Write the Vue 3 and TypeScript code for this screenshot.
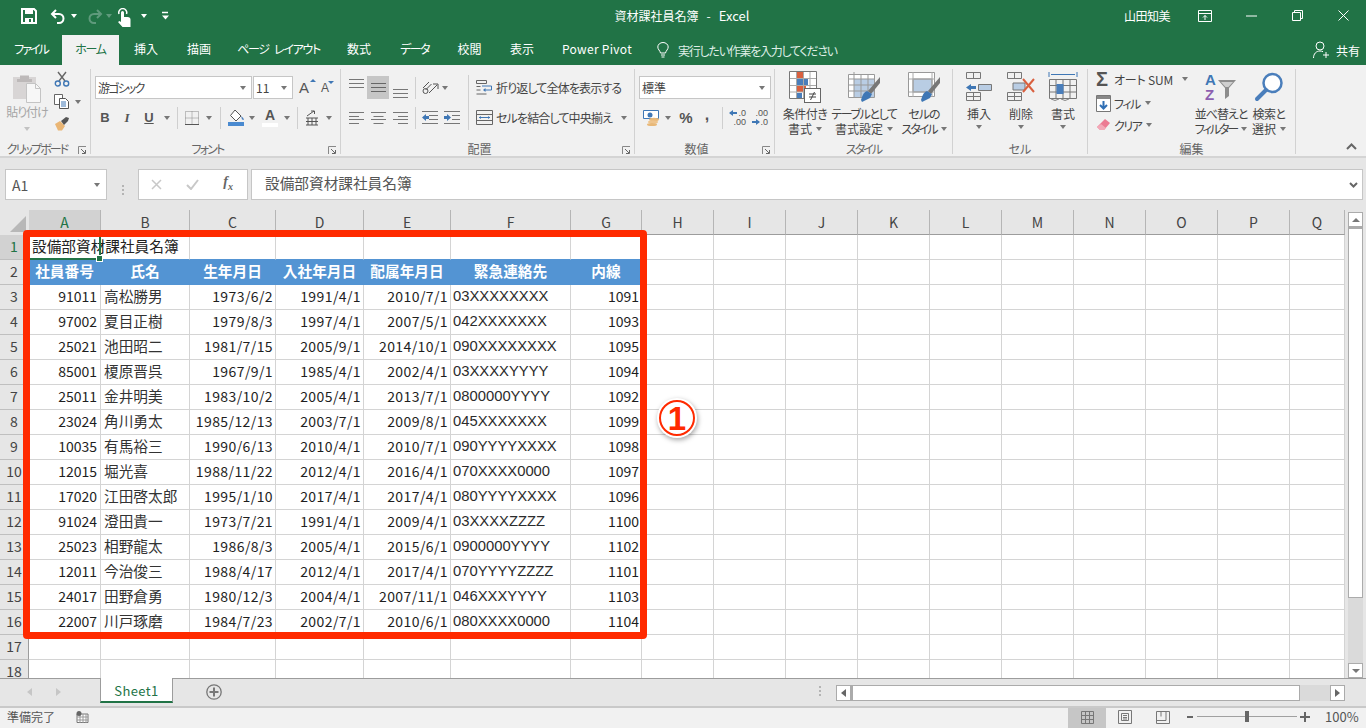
<script setup lang="ts">
interface Cell { text: string; cls: string }
const letters = 'ABCDEFGHIJKLMNOPQ'.split('')
const header = ['社員番号', '氏名', '生年月日', '入社年月日', '配属年月日', '緊急連絡先', '内線']
const data: string[][] = [
  ['91011', '高松勝男', '1973/6/2', '1991/4/1', '2010/7/1', '03XXXXXXXX', '1091'],
  ['97002', '夏目正樹', '1979/8/3', '1997/4/1', '2007/5/1', '042XXXXXXX', '1093'],
  ['25021', '池田昭二', '1981/7/15', '2005/9/1', '2014/10/1', '090XXXXXXXX', '1095'],
  ['85001', '榎原晋呉', '1967/9/1', '1985/4/1', '2002/4/1', '03XXXXYYYY', '1094'],
  ['25011', '金井明美', '1983/10/2', '2005/4/1', '2013/7/1', '0800000YYYY', '1092'],
  ['23024', '角川勇太', '1985/12/13', '2003/7/1', '2009/8/1', '045XXXXXXX', '1099'],
  ['10035', '有馬裕三', '1990/6/13', '2010/4/1', '2010/7/1', '090YYYYXXXX', '1098'],
  ['12015', '堀光喜', '1988/11/22', '2012/4/1', '2016/4/1', '070XXXX0000', '1097'],
  ['17020', '江田啓太郎', '1995/1/10', '2017/4/1', '2017/4/1', '080YYYYXXXX', '1096'],
  ['91024', '澄田貴一', '1973/7/21', '1991/4/1', '2009/4/1', '03XXXXZZZZ', '1100'],
  ['25023', '相野龍太', '1986/8/3', '2005/4/1', '2015/6/1', '0900000YYYY', '1102'],
  ['12011', '今治俊三', '1988/4/17', '2012/4/1', '2017/4/1', '070YYYYZZZZ', '1101'],
  ['24017', '田野倉勇', '1980/12/3', '2004/4/1', '2007/11/1', '046XXXYYYY', '1103'],
  ['22007', '川戸琢磨', '1984/7/23', '2002/7/1', '2010/6/1', '080XXXX0000', '1104'],
]
const kinds = ['right id', 'left jp', 'right date', 'right date', 'right date', 'left phone', 'right']
const rows: { n: number; cells: Cell[] }[] = []
for (let r = 1; r <= 18; r++) {
  const cells: Cell[] = []
  for (let c = 0; c < 17; c++) {
    let text = ''
    let cls = ''
    if (r === 1 && c === 0) { text = '設備部資材課社員名簿'; cls = 'left jp title-cell' }
    else if (r === 1 && c < 7) cls = 'above-head'
    else if (r === 2 && c < 7) { text = header[c]; cls = 'head' }
    else if (r >= 3 && r <= 16 && c < 7) { text = data[r - 3][c]; cls = kinds[c] }
    cells.push({ text, cls })
  }
  rows.push({ n: r, cells })
}
const tabs = ['ファイル', 'ホーム', '挿入', '描画', 'ページ レイアウト', '数式', 'データ', '校閲', '表示', 'Power Pivot']
</script>

<template>
  <div class="app">
    <header class="titlebar">
      <div class="qat">
        <svg class="q-save" width="16" height="16" viewBox="0 0 16 16"><path d="M1 1h12l2 2v12H1z" fill="none" stroke="#fff" stroke-width="2"/><rect x="4" y="1" width="8" height="5" fill="#fff"/><rect x="4" y="10" width="8" height="5" fill="#fff"/><rect x="8" y="11" width="2" height="3" fill="#217346"/></svg>
        <svg class="q-undo" width="16" height="16" viewBox="0 0 16 16"><path d="M6 2 2 6l4 4M2 6h7a4.500 4.500 0 0 1 0 9H7" fill="none" stroke="#fff" stroke-width="2"/></svg>
        <span class="caret white q-c1"></span>
        <svg class="q-redo" width="16" height="16" viewBox="0 0 16 16"><path d="m10 2 4 4-4 4M14 6H7a4.500 4.500 0 0 0 0 9h2" fill="none" stroke="#5f9a7c" stroke-width="2"/></svg>
        <span class="caret dim q-c2"></span>
        <svg class="q-touch" width="14" height="20" viewBox="0 0 14 20"><path d="M2 6a4 4 0 1 1 7.500 0" fill="none" stroke="#fff" stroke-width="1.500"/><path d="M4 4.500a1.500 1.500 0 0 1 3 0V9h3.500q3 0 3 2.500V19H5.500L1 14l1.500-1L4 14z" fill="#fff"/></svg>
        <span class="caret white q-c3"></span>
        <svg class="q-more" width="9" height="9" viewBox="0 0 9 9"><path d="M1 1.500h6" stroke="#fff" stroke-width="1.500"/><path d="M1 4.500h7L4.500 8.500z" fill="#fff"/></svg>
      </div>
      <div class="doc-title">資材課社員名簿&nbsp;&nbsp; - &nbsp;&nbsp;<span class="excel">Excel</span></div>
      <div class="win">
        <span class="user">山田知美</span>
        <svg class="w-ribbon" width="14" height="12" viewBox="0 0 14 12"><path d="M.5.500h13v11H.500zM.5 3.500h13M7 10V5.500M5 7.500l2-2 2 2" fill="none" stroke="#fff"/></svg>
        <svg class="w-min" width="11" height="2" viewBox="0 0 11 2"><path d="M0 1h11" stroke="#fff"/></svg>
        <svg class="w-max" width="11" height="11" viewBox="0 0 11 11"><path d="M.5 2.500h8v8h-8zM2.500 2.500v-2h8v8h-2" fill="none" stroke="#fff"/></svg>
        <svg class="w-close" width="11" height="11" viewBox="0 0 11 11"><path d="m.5.500 10 10M10.500.500l-10 10" stroke="#fff"/></svg>
      </div>
    </header>

    <nav class="tabs">
      <span v-for="(t, i) in tabs" :key="t" class="tab" :class="{ active: i === 1 }">{{ t }}</span>
      <svg class="bulb" width="12" height="16" viewBox="0 0 12 16"><path d="M3.500 11C3 8.500.8 7.500.8 5a5.200 4.500 0 0 1 10.400 0c0 2.500-2.200 3.500-2.700 6zM4 13h4M4.500 15h3" fill="none" stroke="#fff"/></svg>
      <span class="tell">実行したい作業を入力してください</span>
      <svg class="share-ic" width="17" height="18" viewBox="0 0 17 18"><circle cx="7" cy="5" r="4" fill="none" stroke="#fff"/><path d="M.5 17c0-4 2.500-7 6.500-7 1 0 2 .2 3 .7M13 11v6M10 14h6" fill="none" stroke="#fff"/></svg>
      <span class="share">共有</span>
    </nav>

    <section class="ribbon">
      <!-- clipboard -->
      <div class="group g-clip">
        <div class="gbody">
          <div class="big paste">
            <svg width="30" height="29" viewBox="0 0 30 29"><path d="M1 3h23v22H1z" fill="#d8d5d5"/><path d="M8 1.500h9V5h3v3H5V5h3z" fill="#bdb9b9"/><path d="M14.500 9.500h9l5 5v14h-14z" fill="#f7f7f7" stroke="#c4c4c4"/><path d="M23.500 9.500v5h5" fill="none" stroke="#c4c4c4"/></svg>
            <span class="paste-text">貼り付け</span>
            <span class="caret light"></span>
          </div>
          <div class="clip-col">
            <svg width="16" height="16" viewBox="0 0 16 16"><path d="m4 1 7 9M12 1l-7 9" stroke="#666" stroke-width="1.400"/><circle cx="3.800" cy="12.500" r="2.500" fill="none" stroke="#3f77b5" stroke-width="1.400"/><circle cx="12.200" cy="12.500" r="2.500" fill="none" stroke="#3f77b5" stroke-width="1.400"/></svg>
            <div class="copy-row">
              <svg width="16" height="15" viewBox="0 0 16 15"><path d="M.5.500h8v10h-8z" fill="#fff" stroke="#666"/><path d="M5.500 4.500h6l3 3v7h-9z" fill="#fff" stroke="#555"/><path d="M7 8h5M7 10h5M7 12h5" stroke="#3f77b5"/></svg>
              <span class="caret ml5"></span>
            </div>
            <svg width="17" height="15" viewBox="0 0 17 15"><path d="m1 8 5-3 5 5-3 4.500H4z" fill="#eab675"/><path d="m7 5 5-4 3 1-1 3-4 4z" fill="#555"/></svg>
          </div>
        </div>
        <div class="glabel lz ls19">クリップボード</div>
        <span class="launch"><svg width="9" height="9" viewBox="0 0 9 9"><path d="M.5 8V.500H8" fill="none" stroke="#888"/><path d="M3 3l4 4M4 7.500h3.500V4" fill="none" stroke="#666"/></svg></span>
      </div>

      <!-- font -->
      <div class="group g-font">
        <div class="gbody col">
          <div class="row">
            <div class="select s-font"><span class="ls18">游ゴシック</span><span class="caret"></span></div>
            <div class="select s-size"><span>11</span><span class="caret"></span></div>
            <span class="grow-a a1">A<i class="up"></i></span>
            <span class="grow-a a2">A<i class="down"></i></span>
          </div>
          <div class="row r2">
            <span class="ib w22 glyph b">B</span>
            <span class="ib w22 glyph i">I</span>
            <span class="ib w22 glyph u">U</span>
            <span class="ib w14"><span class="caret"></span></span>
            <span class="ib w6"><span class="sep"></span></span>
            <span class="ib w24"><svg width="14" height="14" viewBox="0 0 14 14"><path d="M.5.500h13v13H.500zM7 .5v13M.5 7h13" fill="none" stroke="#888" stroke-dasharray="1 1"/><path d="M0 13.500h14" stroke="#555"/></svg></span>
            <span class="ib w10"><span class="caret"></span></span>
            <span class="ib w12"><span class="sep"></span></span>
            <span class="ib w20"><svg width="17" height="17" viewBox="0 0 17 17"><path d="m7 1 6 6-5 5-5.500-5.500z" fill="#fff" stroke="#555"/><path d="M13 7q3 2 3 4l-2-.5z" fill="#4a7ebb"/><rect y="13" width="16" height="4" fill="#4a8ad0"/></svg></span>
            <span class="ib w12"><span class="caret"></span></span>
            <span class="ib w24 col-a"><b>A</b><i></i></span>
            <span class="ib w9"><span class="caret"></span></span>
            <span class="ib w12"><span class="sep"></span></span>
            <span class="ib w18"><svg width="14" height="16" viewBox="0 0 14 16"><path d="M2 6 9 1M6 1h3.500v3M1 8h12M3 8v7M7 8v7M11 8v7M1 11.500h12M1 15h12" fill="none" stroke="#555"/></svg></span>
            <span class="ib w16"><span class="caret"></span></span>
          </div>
        </div>
        <div class="glabel lz ls18">フォント</div>
        <span class="launch"><svg width="9" height="9" viewBox="0 0 9 9"><path d="M.5 8V.500H8" fill="none" stroke="#888"/><path d="M3 3l4 4M4 7.500h3.500V4" fill="none" stroke="#666"/></svg></span>
      </div>

      <!-- alignment -->
      <div class="group g-align">
        <div class="gbody">
          <div class="col">
            <div class="row">
              <span class="ib w22 top"><svg width="15" height="9" viewBox="0 0 15 9"><path d="M0 .5h15M0 4.500h15M0 8.500h15" stroke="#777"/></svg></span>
              <span class="ib w22 on"><svg width="15" height="9" viewBox="0 0 15 9"><path d="M0 .5h15M0 4.500h15M0 8.500h15" stroke="#666"/></svg></span>
              <span class="ib w22 bottom"><svg width="15" height="9" viewBox="0 0 15 9"><path d="M0 .5h15M0 4.500h15M0 8.500h15" stroke="#777"/></svg></span>
              <span class="ib w8"><span class="sep"></span></span>
              <span class="ib w22"><svg width="17" height="15" viewBox="0 0 17 15"><path d="m1 8 6-6M3.500 10l6-6" stroke="#555"/><circle cx="3.500" cy="11" r="2.500" fill="none" stroke="#555"/><path d="M7 13 15 5M11 4h5v5" fill="none" stroke="#555"/></svg></span>
              <span class="ib w22 jl"><span class="caret"></span></span>
            </div>
            <div class="row r2">
              <span class="ib w22"><svg width="15" height="12" viewBox="0 0 15 12"><path d="M0 .5h15M0 4.500h10M0 7.500h15M0 11.500h10" stroke="#777"/></svg></span>
              <span class="ib w22"><svg width="15" height="12" viewBox="0 0 15 12"><path d="M0 .5h15M2.500 4.500h10M0 7.500h15M2.500 11.500h10" stroke="#777"/></svg></span>
              <span class="ib w22"><svg width="15" height="12" viewBox="0 0 15 12"><path d="M0 .5h15M5 4.500h10M0 7.500h15M5 11.500h10" stroke="#777"/></svg></span>
              <span class="ib w8"><span class="sep"></span></span>
              <span class="ib w22"><svg width="16" height="13" viewBox="0 0 16 13"><path d="M0 .5h16M7 4.500h9M7 8.500h9M0 12.500h16" stroke="#777"/><path d="M0 6.500 4 3v2h3v3H4v2z" fill="#3f77b5"/></svg></span>
              <span class="ib w22"><svg width="16" height="13" viewBox="0 0 16 13"><path d="M0 .5h16M8 4.500h8M8 8.500h8M0 12.500h16" stroke="#777"/><path d="M7 6.500 3 3v2H0v3h3v2z" fill="#3f77b5"/></svg></span>
            </div>
          </div>
          <span class="long-sep"></span>
          <div class="col wrap-col">
            <div class="row">
              <svg class="txt-ic" width="17" height="15" viewBox="0 0 17 15"><path d="M.5.500h10v3H.500zM.5 6.500h4M.5 10h4M.5 14h10" fill="none" stroke="#666"/><path d="M6 6h9.500v4H9" fill="none" stroke="#3f77b5"/><path d="m9.500 8-2.500 2 2.500 2z" fill="#3f77b5"/></svg>
              <span class="rtxt">折り返して全体を表示する</span>
            </div>
            <div class="row r2">
              <svg class="txt-ic" width="17" height="15" viewBox="0 0 17 15"><path d="M.5.500h16v14H.500zM.5 4.500h16M.5 10.500h16" fill="none" stroke="#666"/><path d="M3 7.500h11" stroke="#3f77b5"/><path d="M3 7.500 5 6v3zM14 7.500 12 6v3z" fill="#3f77b5"/></svg>
              <span class="rtxt">セルを結合して中央揃え</span>
              <span class="caret merge-c"></span>
            </div>
          </div>
        </div>
        <div class="glabel lz">配置</div>
        <span class="launch"><svg width="9" height="9" viewBox="0 0 9 9"><path d="M.5 8V.500H8" fill="none" stroke="#888"/><path d="M3 3l4 4M4 7.500h3.500V4" fill="none" stroke="#666"/></svg></span>
      </div>

      <!-- number -->
      <div class="group g-num">
        <div class="gbody col">
          <div class="row">
            <div class="select s-num"><span>標準</span><span class="caret"></span></div>
          </div>
          <div class="row r2">
            <span class="ib w20"><svg width="17" height="16" viewBox="0 0 17 16"><path d="M.5.500h15v8H.500z" fill="#fff" stroke="#3f77b5"/><circle cx="7" cy="5" r="2.500" fill="#3f77b5"/><ellipse cx="11" cy="9.500" rx="5" ry="1.800" fill="#e8b878"/><ellipse cx="10" cy="12" rx="5" ry="1.800" fill="#eec48d"/><ellipse cx="9" cy="14.500" rx="5" ry="1.500" fill="#e8b878"/></svg></span>
            <span class="ib w14"><span class="caret"></span></span>
            <span class="ib w22 pct">%</span>
            <span class="ib w20 comma">,</span>
            <span class="ib w10"><span class="sep"></span></span>
            <span class="ib w22 dec"><em><i class="ar-l"></i>.0</em><em>.00</em></span>
            <span class="ib w22 dec"><em>.00</em><em><i class="ar-r"></i>.0</em></span>
          </div>
        </div>
        <div class="glabel lz">数値</div>
        <span class="launch"><svg width="9" height="9" viewBox="0 0 9 9"><path d="M.5 8V.500H8" fill="none" stroke="#888"/><path d="M3 3l4 4M4 7.500h3.500V4" fill="none" stroke="#666"/></svg></span>
      </div>

      <!-- styles -->
      <div class="group g-style">
        <div class="gbody">
          <div class="big w52">
            <svg class="bi" width="32" height="32" viewBox="0 0 32 32"><path d="M.5.500h27v27H.500z" fill="#fff" stroke="#777"/><rect x="8" y="1" width="6" height="6" fill="#d9603f"/><rect x="8" y="8" width="11" height="6" fill="#4a7ebb"/><rect x="8" y="15" width="9" height="6" fill="#d9603f"/><rect x="8" y="22" width="5" height="5" fill="#4a7ebb"/><path d="M7.500 1v26M14.500 1v26M21 1v26M1 7.500h26M1 14.500h26M1 21h26" stroke="#aaa" fill="none"/><rect x="15.500" y="17.500" width="16" height="14" fill="#fff" stroke="#666"/><path d="M20 23h7M20 26h7M25.500 21l-4 8" stroke="#444"/></svg>
            <span class="ls05">条件付き</span>
            <span class="ln2">書式<i class="caret"></i></span>
          </div>
          <div class="big w66">
            <svg class="bi" width="32" height="32" viewBox="0 0 32 32"><path d="M.5 3.500h26v23H.500z" fill="#fff" stroke="#999"/><rect x="6" y="8" width="20" height="18" fill="#b9cde4"/><path d="M6 1v26M13 4v23M20 4v23M1 8h26M1 14h26M1 20h26" stroke="#999" fill="none"/><path d="m32 6-12 14 3 3L32 12z" fill="#777"/><path d="M19 20q-4 1-6 9l1 2 8-4 2-4z" fill="#3f77b5"/></svg>
            <span class="ls14">テーブルとして</span>
            <span class="ln2">書式設定<i class="caret"></i></span>
          </div>
          <div class="big w54">
            <svg class="bi" width="32" height="32" viewBox="0 0 32 32"><path d="M.5 1.500h26v24H.500z" fill="#fff" stroke="#999"/><rect x="5" y="8" width="19" height="13" fill="#b9cde4" stroke="#888"/><path d="M5 1v25M24 1v25M1 8h26M1 21h26" stroke="#aaa" fill="none"/><path d="m32 6-12 14 3 3L32 12z" fill="#777"/><path d="M19 20q-4 1-6 9l1 2 8-4 2-4z" fill="#3f77b5"/></svg>
            <span class="ls1">セルの</span>
            <span class="ln2 ls2">スタイル<i class="caret"></i></span>
          </div>
        </div>
        <div class="glabel ls2">スタイル</div>
      </div>

      <!-- cells -->
      <div class="group g-cells">
        <div class="gbody">
          <div class="big w42">
            <svg class="bi" width="28" height="32" viewBox="0 0 28 32"><path d="M1.500 1.500h14v6h-14zM8.500 1.500v6M13.500 13.500h13v6h-13zM20 13.500v6M1.500 21.500h14v8h-14zM8.500 21.500v8M1.500 25.500h14" fill="none" stroke="#777"/><rect x="14" y="14" width="12" height="5" fill="#b9cde4"/><path d="M1 16.500 6 13v2h5v3H6v2z" fill="#3f77b5"/></svg>
            <span>挿入</span>
            <i class="caret mid"></i>
          </div>
          <div class="big w42">
            <svg class="bi" width="30" height="32" viewBox="0 0 30 32"><path d="M1.500 1.500h14v6h-14zM8.500 1.500v6M1.500 21.500h14v8h-14zM8.500 21.500v8M1.500 25.500h14" fill="none" stroke="#777"/><path d="M7 12h12v7H7z" fill="#b9cde4" stroke="#777"/><path d="m17 8 11 13M28 8 17 21" stroke="#d9603f" stroke-width="2"/></svg>
            <span>削除</span>
            <i class="caret mid"></i>
          </div>
          <div class="big w42">
            <svg class="bi" width="30" height="32" viewBox="0 0 30 32"><path d="M1.500 8.500h27v19h-27zM8 8.500v19M15 8.500v19M22 8.500v19M1.500 14.500h27M1.500 21h27" fill="none" stroke="#777"/><rect x="8.500" y="13" width="7" height="10" fill="#4a7ebb"/><path d="M1 1v5M29 1v5M3 3.500h24" stroke="#3f77b5"/><path d="M3 28q4 3 8 0M13 28q4 3 8 0" fill="none" stroke="#888"/></svg>
            <span>書式</span>
            <i class="caret mid"></i>
          </div>
        </div>
        <div class="glabel">セル</div>
      </div>

      <!-- editing -->
      <div class="group g-edit">
        <div class="gbody">
          <div class="edit-col">
            <div class="e-row e1"><span class="sigma">Σ</span><span class="etxt sum">オート SUM</span><span class="caret c-sum"></span></div>
            <div class="e-row e2">
              <svg width="15" height="17" viewBox="0 0 15 17"><path d="M.5.500h14v16H.500z" fill="#fff" stroke="#777"/><rect x="1" y="1" width="13" height="3" fill="#888"/><path d="M7.500 6v7M4 10l3.500 3.500L11 10" fill="none" stroke="#2f6fb5" stroke-width="2"/></svg>
              <span class="etxt ls15">フィル</span><span class="caret ml5"></span>
            </div>
            <div class="e-row e3">
              <svg width="15" height="14" viewBox="0 0 15 14"><path d="m9 1 5 4-6 7H4L1 9z" fill="#ec7b93"/><path d="M1 9l3 3h4l2-2-5-4z" fill="#f3a9b8"/></svg>
              <span class="etxt ls15">クリア</span><span class="caret ml5"></span>
            </div>
          </div>
          <div class="big w54 sort">
            <svg class="bi" width="32" height="30" viewBox="0 0 32 30"><text x="0" y="13" class="az-a">A</text><text x="0" y="28" class="az-z">Z</text><path d="M13 8h18l-7 8v8l-4 3V16z" fill="#8d8d8d"/><path d="M16 10h12l-4.500 5h-3z" fill="#cfcfcf"/></svg>
            <span class="ls1">並べ替えと</span>
            <span class="ln2 ls2">フィルター<i class="caret"></i></span>
          </div>
          <div class="big w42 find">
            <svg class="bi" width="30" height="30" viewBox="0 0 30 30"><circle cx="18.500" cy="11" r="9" fill="#fff" stroke="#4a7ebb" stroke-width="2.500"/><path d="m12 18-9 9" stroke="#4a7ebb" stroke-width="4" stroke-linecap="round"/></svg>
            <span class="ls05">検索と</span>
            <span class="ln2">選択<i class="caret"></i></span>
          </div>
        </div>
        <div class="glabel">編集</div>
      </div>
      <div class="collapse"><svg width="11" height="7" viewBox="0 0 11 7"><path d="m1 6 4.500-4.500L10 6" fill="none" stroke="#666" stroke-width="2"/></svg></div>
    </section>

    <section class="formula">
      <div class="namebox"><span>A1</span><span class="caret"></span></div>
      <div class="fdots"><i></i><i></i><i></i></div>
      <div class="fbtns">
        <svg width="11" height="11" viewBox="0 0 11 11"><path d="m1 1 9 9M10 1l-9 9" stroke="#c8c8c8" stroke-width="1.500"/></svg>
        <svg width="13" height="11" viewBox="0 0 13 11"><path d="m1 6 4 4 7-9" fill="none" stroke="#c8c8c8" stroke-width="2"/></svg>
        <span class="fx">f<sub>x</sub></span>
      </div>
      <div class="finput">
        <span class="ftext">設備部資材課社員名簿</span>
        <svg width="9" height="6" viewBox="0 0 9 6"><path d="m1 1 3.500 3.500L8 1" fill="none" stroke="#666" stroke-width="2"/></svg>
      </div>
    </section>

    <section class="sheet">
      <div class="gridwrap">
        <div class="grid">
          <div class="corner"><i></i></div>
          <div v-for="(l, i) in letters" :key="l" class="ch" :class="{ sel: i === 0 }">{{ l }}</div>
          <template v-for="r in rows" :key="r.n">
            <div class="rh" :class="{ sel: r.n === 1 }">{{ r.n }}</div>
            <div v-for="(c, i) in r.cells" :key="i" class="cell" :class="c.cls">{{ c.text }}</div>
          </template>
        </div>
        <div class="a1-sel"><i></i></div>
        <div class="redbox"></div>
        <div class="badge"><span>1</span></div>
      </div>
      <aside class="vbar">
        <div class="vbtn"><span class="tri-u"></span></div>
        <div class="vthumb"></div>
        <div class="vrest"></div>
        <div class="vbtn"><span class="caret"></span></div>
      </aside>
    </section>

    <section class="sheetbar">
      <span class="nav"><i class="lt"></i></span>
      <span class="nav nav2"><i class="rt"></i></span>
      <span class="stab">Sheet1</span>
      <span class="addsheet"><svg width="16" height="16" viewBox="0 0 16 16"><circle cx="8" cy="8" r="7.200" fill="none" stroke="#777" stroke-width="1.300"/><path d="M8 3.500v9M3.500 8h9" stroke="#777" stroke-width="2"/></svg></span>
      <span class="sb-dots"><i></i><i></i><i></i></span>
      <div class="hbar">
        <span class="hbtn"><i class="lt"></i></span>
        <span class="hthumb"></span>
        <span class="hrest"></span>
        <span class="hbtn"><i class="rt"></i></span>
      </div>
    </section>

    <footer class="status">
      <span class="ready">準備完了</span>
      <svg class="macro" width="13" height="12" viewBox="0 0 13 12"><path d="M1 3h11v8.500H1z" fill="#fff" stroke="#777"/><path d="M4 3v9M7 3v9M10 3v9M1 6h11M1 9h11" stroke="#999"/><circle cx="3" cy="2.500" r="2.500" fill="#666"/></svg>
      <span class="view on"><svg width="13" height="13" viewBox="0 0 13 13"><path d="M.5.500h12v12H.500zM4.500.500v12M8.500.500v12M.5 4.500h12M.5 8.500h12" fill="none" stroke="#777"/></svg></span>
      <span class="view"><svg width="14" height="14" viewBox="0 0 14 14"><path d="M.5.500h13v13H.500zM3.500 3.500h7v7h-7zM5 5.500h4M5 7.500h4M5 9h4" fill="none" stroke="#777"/></svg></span>
      <span class="view"><svg width="14" height="13" viewBox="0 0 14 13"><path d="M.5.500h13v12H.500zM.5 9.500h9.500V.500M5 .5v5" fill="none" stroke="#777"/></svg></span>
      <span class="z-minus"></span>
      <span class="slider"><i></i></span>
      <span class="z-plus"></span>
      <span class="zoomtxt">100%</span>
    </footer>
  </div>
</template>

<style>
html, body { margin: 0; overflow: hidden; background: #fff; }
</style>

<style scoped>
.app { width: 1366px; height: 728px; overflow: hidden; display: flex; flex-direction: column; font-family: "Noto Sans CJK JP", "Noto Sans", sans-serif; font-feature-settings: "palt"; font-size: 12px; color: #444; background: #e6e6e6; }
i { font-style: normal; display: block; }
.caret { display: inline-block; width: 0; height: 0; border-left: 3.5px solid transparent; border-right: 3.5px solid transparent; border-top: 4px solid #777; }
.caret.white { border-top-color: #fff; }
.caret.dim { border-top-color: #5f9a7c; }
.caret.light { border-top-color: #c2c2c2; }
.ml5 { margin-left: 5px; }
.ls05 { letter-spacing: -.5px; } .ls1 { letter-spacing: -1px; } .ls14 { letter-spacing: -1.4px; } .ls15 { letter-spacing: -1.5px; }
.ls18 { letter-spacing: -1.8px; } .ls19 { letter-spacing: -1.9px; } .ls2 { letter-spacing: -2px; }

.titlebar { height: 35px; background: #217346; color: #fff; display: flex; align-items: center; flex: none; padding-bottom: 4px; box-sizing: border-box; }
.qat { width: 560px; display: flex; align-items: center; padding-left: 21px; box-sizing: border-box; flex: none; }
.q-undo { margin-left: 13px; }
.q-c1 { margin-left: 5px; }
.q-redo { margin-left: 10px; }
.q-c2 { margin-left: 3px; }
.q-touch { margin-left: 5px; margin-top: 4px; }
.q-c3 { margin-left: 10px; }
.q-more { margin-left: 14px; }
.doc-title { width: 250px; flex: none; text-align: center; font-size: 12px; margin-left: -3px; white-space: nowrap; }
.excel { font-size: 13px; }
.win { flex: 1; display: flex; align-items: center; }
.user { margin-left: 317px; font-size: 12px; width: 46px; white-space: nowrap; letter-spacing: -.5px; flex: none; }
.w-ribbon { margin-left: 28px; flex: none; }
.w-min { margin-left: 34px; flex: none; }
.w-max { margin-left: 35px; flex: none; }
.w-close { margin-left: 35px; flex: none; }

.tabs { height: 30px; background: #217346; color: #fff; display: flex; align-items: center; flex: none; }
.tab { height: 30px; line-height: 28px; box-sizing: border-box; white-space: nowrap; text-align: center; flex: none; }
.tab:nth-child(1) { width: 62px; letter-spacing: -2px; }
.tab:nth-child(2) { width: 57px; letter-spacing: -1.3px; }
.tab:nth-child(3) { width: 54px; }
.tab:nth-child(4) { width: 52px; }
.tab:nth-child(5) { width: 107px; letter-spacing: -1.3px; word-spacing: 4px; }
.tab:nth-child(6) { width: 54px; }
.tab:nth-child(7) { width: 57px; letter-spacing: -1.6px; }
.tab:nth-child(8) { width: 53px; }
.tab:nth-child(9) { width: 52px; }
.tab:nth-child(10) { width: 98px; letter-spacing: .3px; }
.tab.active { background: #f1f1f1; color: #217346; }
.bulb { margin-left: 11px; flex: none; }
.tell { margin-left: 9px; white-space: nowrap; color: #dfeee6; width: 635px; letter-spacing: -1.25px; flex: none; }
.share-ic { flex: none; }
.share { margin-left: 6px; white-space: nowrap; flex: none; }

.ribbon { height: 93px; background: #f1f1f1; border-bottom: 2px solid #d4d4d4; box-sizing: border-box; display: flex; flex: none; padding-top: 4px; }
.group { height: 85px; position: relative; box-sizing: border-box; border-right: 1px solid #d2d2d2; display: flex; flex-direction: column; flex: none; }
.g-clip { width: 91px; } .g-font { width: 250px; } .g-align { width: 294px; } .g-num { width: 140px; }
.g-style { width: 178px; } .g-cells { width: 135px; } .g-edit { width: 208px; }
.gbody { height: 72px; display: flex; flex: none; }
.gbody.col, .col { display: flex; flex-direction: column; padding-top: 7px; box-sizing: border-box; }
.glabel { height: 16px; line-height: 16px; text-align: center; color: #666; font-size: 12px; flex: none; white-space: nowrap; }
.glabel.lz { padding-right: 16px; }
.launch { position: absolute; right: 3px; bottom: -1px; height: 9px; line-height: 0; }
.row { display: flex; align-items: center; height: 23px; }
.row.r2 { margin-top: 7px; }
.ib { display: flex; align-items: center; justify-content: center; height: 23px; flex: none; }
.w6 { width: 6px; } .w8 { width: 8px; } .w9 { width: 9px; } .w10 { width: 10px; } .w12 { width: 12px; }
.w14 { width: 14px; } .w16 { width: 16px; } .w18 { width: 18px; } .w20 { width: 20px; } .w22 { width: 22px; } .w24 { width: 24px; }
.sep { display: block; width: 1px; height: 22px; background: #cfcfcf; }
.glyph { font-family: "Liberation Sans", sans-serif; font-size: 13px; color: #555; }
.glyph.b { font-weight: 700; }
.glyph.i { font-style: italic; font-weight: 700; font-family: "Liberation Serif", serif; }
.glyph.u { font-weight: 700; text-decoration: underline; }
.big { display: flex; flex-direction: column; align-items: center; flex: none; line-height: 14.500px; white-space: nowrap; box-sizing: border-box; padding-top: 2px; }
.bi { display: block; height: 32px; margin-bottom: 4px; }
.big .ln2 { display: flex; align-items: center; gap: 4px; }
.caret.mid { margin-top: 3px; }
.w42 { width: 42px; } .w52 { width: 52px; } .w54 { width: 54px; } .w66 { width: 66px; }

.paste { width: 54px; padding-top: 5px; }
.paste-text { color: #a5a5a5; margin-top: 2px; letter-spacing: -1px; }
.paste .caret { margin-top: 7px; }
.clip-col { display: flex; flex-direction: column; gap: 7px; padding-top: 2px; }
.copy-row { display: flex; align-items: center; }
.select { height: 23px; box-sizing: border-box; background: #fff; border: 1px solid #c6c6c6; display: flex; align-items: center; justify-content: space-between; padding: 0 5px 0 2px; color: #444; flex: none; }
.s-font { width: 157px; margin-left: 4px; }
.s-size { width: 40px; margin-left: 1px; padding-left: 2px; }
.s-num { width: 132px; margin-left: 4px; }
.grow-a { position: relative; font-family: "Liberation Sans", sans-serif; color: #555; }
.a1 { font-size: 15px; margin-left: 6px; width: 22px; }
.a2 { font-size: 12px; margin-left: 0; }
.up, .down { position: absolute; left: 11px; top: 0; width: 0; height: 0; border-left: 3px solid transparent; border-right: 3px solid transparent; }
.up { border-bottom: 3px solid #3f77b5; }
.down { border-top: 3px solid #3f77b5; left: 7px; }
.g-font .r2 { padding-left: 3px; }
.col-a { flex-direction: column; line-height: 13px; }
.col-a b { font-family: "Liberation Sans", sans-serif; font-size: 14px; color: #555; }
.col-a i { width: 16px; height: 4px; background: #fff; margin-top: 1px; }

.g-align > .gbody { padding-left: 4px; }
.on { background: #c6c6c6; }
.top { align-items: flex-start; padding-top: 3px; box-sizing: border-box; }
.bottom { align-items: flex-end; padding-bottom: 1px; box-sizing: border-box; }
.jl { justify-content: flex-start; padding-left: 1px; box-sizing: border-box; }
.long-sep { width: 1px; height: 55px; background: #cfcfcf; margin: 6px 0 0 5px; }
.wrap-col { margin-left: 7px; }
.txt-ic { flex: none; }
.rtxt { margin-left: 3px; white-space: nowrap; font-size: 12px; width: 126px; letter-spacing: -.85px; }
.row.r2 .rtxt { width: 117px; }
.merge-c { margin-left: 8px; }

.g-num .r2 { padding-left: 6px; }
.pct { font-family: "Liberation Sans", sans-serif; font-size: 15px; font-weight: 700; color: #555; }
.comma { font-family: "Liberation Sans", sans-serif; font-size: 16px; font-weight: 700; color: #555; padding-bottom: 5px; box-sizing: border-box; }
.dec { flex-direction: column; font-family: "Liberation Sans", sans-serif; font-size: 9px; line-height: 9px; color: #555; align-items: flex-end; }
.dec em { font-style: normal; display: flex; align-items: center; gap: 1px; padding-right: 3px; }
.ar-l, .ar-r { width: 7px; height: 2px; background: #3f77b5; position: relative; }
.ar-l::before, .ar-r::after { content: ""; position: absolute; top: -2px; border-top: 3px solid transparent; border-bottom: 3px solid transparent; }
.ar-l::before { left: -1px; border-right: 4px solid #3f77b5; }
.ar-r::after { right: -1px; border-left: 4px solid #3f77b5; }

.g-style > .gbody { padding-left: 4px; }
.g-cells > .gbody { padding-left: 5px; }
.edit-col { width: 106px; padding: 3px 0 0 8px; box-sizing: border-box; flex: none; }
.e-row { display: flex; align-items: center; height: 22px; }
.sigma { font-family: "Liberation Sans", sans-serif; font-size: 20px; font-weight: 700; color: #555; line-height: 18px; width: 18px; }
.e1 { margin-top: -4px; }
.e2 { margin-top: 2px; } .e3 { margin-top: 0; }
.etxt { margin-left: 3px; white-space: nowrap; }
.c-sum { margin-left: 10px; }
.sum { width: 58px; margin-left: 0; letter-spacing: -.2px; }
.az-a, .az-z { font-family: "Liberation Sans", sans-serif; font-size: 15px; font-weight: 700; }
.az-a { fill: #3f77b5; } .az-z { fill: #8d5fb0; }
.collapse { flex: 1; display: flex; justify-content: flex-end; align-items: flex-end; padding: 0 9px 4px 0; height: 85px; box-sizing: border-box; }

.formula { height: 52px; display: flex; padding-top: 11px; box-sizing: border-box; flex: none; }
.namebox, .fbtns, .finput { height: 31px; box-sizing: border-box; background: #fff; border: 1px solid #c6c6c6; display: flex; align-items: center; }
.namebox { width: 102px; margin-left: 5px; justify-content: space-between; padding: 0 6px; font-size: 14px; color: #555; }
.fdots { width: 31px; display: flex; flex-direction: column; align-items: center; justify-content: center; gap: 2px; }
.fdots i, .sb-dots i { width: 2px; height: 2px; background: #b4b4b4; }
.fbtns { width: 110px; justify-content: space-between; padding: 0 14px 0 12px; }
.fx { font-family: "Liberation Serif", serif; font-style: italic; font-weight: 700; color: #666; font-size: 14px; margin-top: -3px; }
.fx sub { font-size: 10px; }
.finput { margin-left: 3px; width: 1112px; padding: 0 4px 0 13px; justify-content: space-between; font-size: 14.670px; color: #555; font-feature-settings: normal; }
.ftext { margin-top: -4px; }

.sheet { height: 468px; display: flex; flex: none; overflow: hidden; }
.gridwrap { width: 1345px; position: relative; overflow: hidden; flex: none; }
.grid { display: grid; grid-template-columns: 29px 72px 89px 86px 88px 87px 120px 71px 72px 72px 72px 72px 72px 72px 72px 72px 72px 55px; grid-auto-rows: 25px; background: #fff; font-feature-settings: normal; }
.corner { background: #e6e6e6; position: relative; }
.corner i { position: absolute; right: 3px; bottom: 3px; width: 0; height: 0; border-left: 16px solid transparent; border-bottom: 16px solid #b8b8b8; }
.ch, .rh { background: #e6e6e6; color: #444; font-size: 14px; text-align: center; box-sizing: border-box; }
.ch { border-right: 1px solid #b5b5b5; border-bottom: 1px solid #9c9c9c; line-height: 25px; }
.rh { border-right: 1px solid #9c9c9c; border-bottom: 1px solid #bfbfbf; line-height: 23px; }
.ch.sel, .rh.sel { background: #d2d2d2; color: #217346; }
.cell { box-sizing: border-box; border-right: 1px solid #d4d4d4; border-bottom: 1px solid #d4d4d4; font-size: 14px; line-height: 22px; color: #1e1e1e; white-space: nowrap; padding: 0 3px; overflow: visible; min-width: 0; }
.cell.right { text-align: right; padding-right: 2px; }
.cell.id { padding-right: 3px; }
.cell.date { letter-spacing: .4px; }
.cell.left { text-align: left; }
.cell.phone { font-family: "Liberation Sans", sans-serif; font-size: 14.800px; padding-left: 2px; color: #2c2c2c; }
.cell.jp { font-size: 14.670px; color: #333; }
.cell.title-cell { color: #222; position: relative; z-index: 1; background: transparent; }
.cell.above-head { border-bottom-color: #5394d3; }
.cell.head { background: #5394d3; border-color: #5394d3; color: #fff; font-weight: 700; font-size: 14.670px; text-align: center; line-height: 22px; }
.a1-sel { position: absolute; left: 29px; top: 25px; width: 72px; height: 25px; box-sizing: border-box; border-right: 2px solid #217346; border-bottom: 2px solid #217346; z-index: 2; pointer-events: none; }
.a1-sel i { position: absolute; right: -4px; bottom: -4px; width: 5px; height: 5px; background: #217346; border: 1px solid #fff; }
.redbox { position: absolute; left: 23px; top: 20px; width: 624px; height: 409px; box-sizing: border-box; border: 7px solid #ff2a00; border-radius: 4px; z-index: 3; }
.badge { position: absolute; left: 659px; top: 190px; width: 36px; height: 36px; box-sizing: border-box; border-radius: 50%; background: #fff; border: 2px solid #ff2a00; box-shadow: 0 0 0 2px #fff, 1px 2px 5px 2px rgba(0,0,0,.35); display: flex; align-items: center; justify-content: center; color: #ff2a00; font: 700 33px/1 "Liberation Sans", sans-serif; z-index: 4; }

.vbar { flex: 1; padding: 2px 3px 0; box-sizing: border-box; display: flex; flex-direction: column; }
.vbtn { height: 15px; background: #fff; box-sizing: border-box; border: 1px solid #ababab; display: flex; align-items: center; justify-content: center; flex: none; }
.tri-u { width: 0; height: 0; border-left: 4px solid transparent; border-right: 4px solid transparent; border-bottom: 4px solid #777; }
.vbar .caret { border-left-width: 4px; border-right-width: 4px; }
.vthumb { height: 371px; background: #fff; border: 1px solid #ababab; border-top-width: 2px; box-sizing: border-box; flex: none; }
.vrest { flex: 1; background: #dadada; }

.sheetbar { height: 28px; border-top: 1px solid #9c9c9c; box-sizing: border-box; display: flex; position: relative; flex: none; background: #e6e6e6; }
.nav { width: 29px; height: 26px; margin-left: 15px; display: flex; align-items: center; justify-content: center; flex: none; }
.nav2 { margin-left: 0; width: 29px; }
.lt, .rt { width: 0; height: 0; border-top: 4px solid transparent; border-bottom: 4px solid transparent; }
.nav .lt { border-right: 5px solid #c6c6c6; }
.nav .rt { border-left: 5px solid #c6c6c6; }
.stab { width: 73px; height: 25px; margin-left: 27px; margin-top: -1px; box-sizing: border-box; background: #fff; border-left: 1px solid #9c9c9c; border-right: 1px solid #9c9c9c; border-bottom: 2px solid #217346; color: #217346; font-size: 13px; text-align: center; line-height: 25px; flex: none; letter-spacing: .4px; }
.addsheet { margin-left: 33px; margin-top: 5px; height: 16px; flex: none; }
.sb-dots { position: absolute; left: 819px; top: 7px; display: flex; flex-direction: column; gap: 2px; }
.hbar { position: absolute; left: 836px; top: 6px; width: 509px; height: 16px; display: flex; background: #dadada; }
.hbtn { width: 15px; background: #fff; border: 1px solid #ababab; box-sizing: border-box; display: flex; align-items: center; justify-content: center; flex: none; }
.hbtn .lt { border-right: 5px solid #666; }
.hbtn .rt { border-left: 5px solid #666; }
.hthumb { width: 449px; background: #fff; border: 1px solid #ababab; border-left-width: 2px; box-sizing: border-box; flex: none; }
.hrest { flex: 1; }

.status { height: 22px; background: #f1f1f1; border-top: 2px solid #c9c9c9; box-sizing: border-box; display: flex; align-items: center; flex: none; color: #555; padding-bottom: 3px; }
.ready { margin-left: 7px; width: 48px; white-space: nowrap; }
.macro { margin-left: 21px; }
.view { width: 38px; height: 20px; margin: 0 0 -3px; align-self: flex-start; display: flex; align-items: center; justify-content: center; flex: none; padding-bottom: 2px; box-sizing: border-box; }
.view.on { background: #c6c6c6; margin-left: 979px; }
.z-minus { width: 6px; height: 2px; background: #666; margin-left: 5px; flex: none; }
.slider { width: 100px; height: 1px; background: #a0a0a0; margin-left: 4px; position: relative; flex: none; }
.slider i { position: absolute; left: 48px; top: -5px; width: 4px; height: 11px; background: #666; }
.z-plus { width: 10px; height: 10px; margin-left: 3px; background: linear-gradient(#666,#666) center/10px 2px no-repeat, linear-gradient(#666,#666) center/2px 10px no-repeat; flex: none; }
.zoomtxt { margin-left: 15px; font-size: 13px; color: #555; white-space: nowrap; }
</style>
